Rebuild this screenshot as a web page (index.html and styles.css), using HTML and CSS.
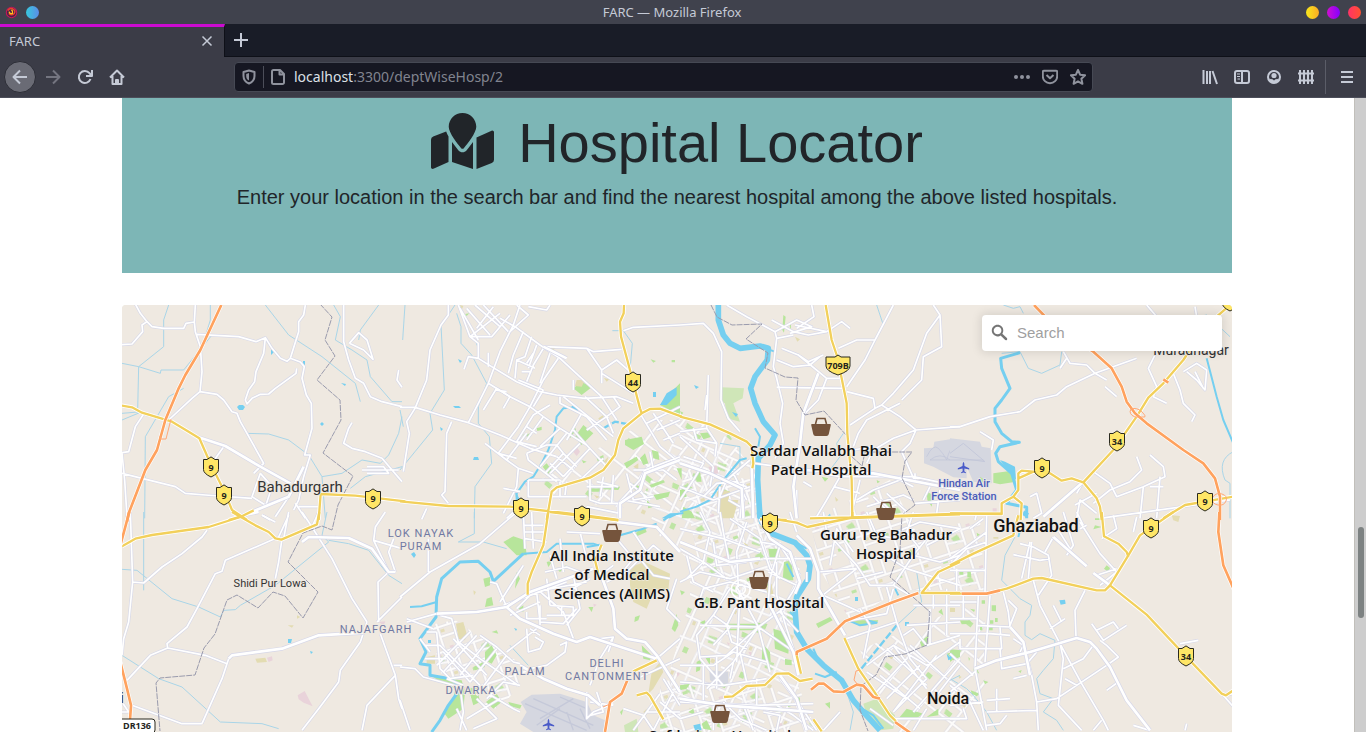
FILE: index.html
```html
<!DOCTYPE html>
<html lang="en">
<head>
<meta charset="utf-8">
<meta name="viewport" content="width=device-width, initial-scale=1">
<title>FARC</title>
<link rel="stylesheet" href="styles.css">
</head>
<body class="window">
<header class="chrome">
  <div class="titlebar">
    <div class="title-side">
      <svg class="dot" viewBox="0 0 14 14" aria-hidden="true"><circle cx="7" cy="7" r="5.6" fill="#4a2145" stroke="#c2185b" stroke-width="1.2"/><path d="M3 5Q5 2 8 3Q12 5 10 8Q7 11 4 8" fill="none" stroke="#e8432e" stroke-width="1.6"/><path d="M4.500 6Q5 9 8 8Q9 6 7 4" fill="none" stroke="#ffc21f" stroke-width="1.500"/></svg>
      <span class="dot dot-blue"></span>
    </div>
    <div class="window-title">FARC — Mozilla Firefox</div>
    <div class="title-side title-end">
      <button class="dot dot-yellow" aria-label="Minimize"></button>
      <button class="dot dot-purple" aria-label="Maximize"></button>
      <button class="dot dot-red" aria-label="Close window"></button>
    </div>
  </div>
  <div class="tabbar">
    <div class="tab"><span>FARC</span>
      <button class="icon-btn" aria-label="Close tab"><svg class="icon" viewBox="0 0 16 16"><path d="M3.500 3.500l9 9m0-9l-9 9"/></svg></button>
    </div>
    <button class="new-tab" aria-label="New tab"><svg class="icon" viewBox="0 0 16 16"><path d="M8 1v14M1 8h14"/></svg></button>
  </div>
  <nav class="navbar">
    <div class="nav-left">
      <button class="back" aria-label="Back"><svg class="icon" viewBox="0 0 16 16"><path d="M15 8H1.500M8 1.500L1.500 8 8 14.500"/></svg></button>
      <button class="icon-btn dim" aria-label="Forward"><svg class="icon" viewBox="0 0 16 16"><path d="M1 8h13.500M8 1.500L14.500 8 8 14.500"/></svg></button>
      <button class="icon-btn" aria-label="Reload"><svg class="icon" viewBox="0 0 16 16"><path d="M13.500 10A6 6 0 1 1 12.500 4.200L14 6"/><path d="M15 1v6H9" /></svg></button>
      <button class="icon-btn" aria-label="Home"><svg class="icon" viewBox="0 0 16 16"><path d="M1 8.500L8 1.500l7 7M3.500 7v8h9V7M7 15v-4h2v4"/></svg></button>
    </div>
    <div class="urlbar">
      <svg class="icon grey" viewBox="0 0 16 16" aria-hidden="true"><path d="M8 1.500L13.500 3v4c0 3.500-2 6-5.500 7.500C4.500 13 2.500 10.500 2.500 7V3z"/><path d="M8 4v7.500C6 10.500 5.200 9 5.200 7V5z" fill="currentColor" stroke="none"/></svg>
      <span class="url-sep"></span>
      <svg class="icon grey" viewBox="0 0 16 16" aria-hidden="true"><path d="M3.500 1H10l4 4v8.500a1.500 1.500 0 0 1-1.500 1.500h-9A1.500 1.500 0 0 1 2 13.500v-11A1.500 1.500 0 0 1 3.500 1zM9.500 1v4.500H14"/></svg>
      <div class="url"><b>localhost</b>:3300/deptWiseHosp/2</div>
      <button class="icon-btn grey" aria-label="Page actions"><svg class="icon" viewBox="0 0 16 16"><g fill="currentColor" stroke="none"><circle cx="2" cy="8" r="2"/><circle cx="8" cy="8" r="2"/><circle cx="14" cy="8" r="2"/></g></svg></button>
      <button class="icon-btn grey" aria-label="Save to Pocket"><svg class="icon" viewBox="0 0 16 16"><path d="M2 1.800h12a1.200 1.200 0 0 1 1.200 1.200v4.200a7.200 7 0 0 1-14.400 0V3A1.200 1.200 0 0 1 2 1.800zM4.500 6L8 9.300 11.500 6"/></svg></button>
      <button class="icon-btn grey" aria-label="Bookmark"><svg class="icon" viewBox="0 0 16 16"><path d="M8 1l2.100 4.700 5 .6-3.700 3.500 1 5L8 12.300l-4.400 2.500 1-5L.900 6.300l5-.6z"/></svg></button>
    </div>
    <div class="nav-right">
      <button class="icon-btn" aria-label="Library"><svg class="icon" viewBox="0 0 16 16"><path d="M1.500 1v14M5 2v13M8 2v13M10.500 2l4.500 13"/></svg></button>
      <button class="icon-btn" aria-label="Sidebars"><svg class="icon" viewBox="0 0 16 16"><rect x="1" y="2" width="14" height="12" rx="2"/><path d="M8 2v12"/><path d="M3 5h3M3 7.500h3M3.500 10H6" stroke-width="1"/></svg></button>
      <button class="icon-btn" aria-label="Account"><svg class="icon" viewBox="0 0 16 16"><circle cx="8" cy="8" r="6"/><circle cx="8" cy="6.500" r="2.600" fill="currentColor" stroke="none"/><path d="M3 9.500q2 1 3 .5l2 1.500 2-1.500q1 .5 3-.5-1 4.500-5 4.500t-5-4.500z" fill="currentColor" stroke="none"/></svg></button>
      <button class="icon-btn" aria-label="Extension"><svg class="icon" viewBox="0 0 16 16"><path d="M2 1v14M6 1v14M10 1v14M14 1v14M0 4.500h16M0 11.500h16"/></svg></button>
      <span class="nav-sep"></span>
      <button class="icon-btn" aria-label="Menu"><svg class="icon" viewBox="0 0 16 16"><path d="M2 3h12M2 8h12M2 13h12"/></svg></button>
    </div>
  </nav>
</header>

<div class="viewport">
<main class="page">
  <section class="jumbotron">
    <h1 class="headline">
      <svg class="map-mark" viewBox="0 0 576 512" aria-hidden="true"><path d="M288 0c-69.590 0-126 56.410-126 126 0 56.260 82.350 158.800 113.900 196.020 6.390 7.540 17.820 7.540 24.200 0C331.650 284.800 414 182.260 414 126 414 56.410 357.590 0 288 0zM20.120 215.950A32.006 32.006 0 0 0 0 245.660v250.320c0 11.320 11.430 19.060 21.940 14.860L160 448V214.920c-8.840-15.980-16.070-31.540-21.250-46.420L20.120 215.950zM288 359.670c-14.070 0-27.380-6.180-36.510-16.960-19.660-23.200-40.570-49.620-59.490-76.720v182l192 64V266c-18.920 27.090-39.820 53.520-59.490 76.720-9.130 10.770-22.440 16.950-36.510 16.950zm266.060-198.510L416 224v288l139.880-55.950A31.996 31.996 0 0 0 576 426.340V176.020c0-11.320-11.430-19.060-21.940-14.860z"/></svg>
      <span>Hospital Locator</span>
    </h1>
    <p class="lead">Enter your location in the search bar and find the nearest hospital among the above listed hospitals.</p>
  </section>

  <section class="map" aria-label="Hospital map">
  <svg class="map-canvas" viewBox="122 305 1110 440" role="img" aria-label="Map of Delhi">
  <defs>
    <!-- repeating city blocks for the dense districts -->
    <pattern id="blocks" width="62" height="54" patternUnits="userSpaceOnUse" patternTransform="rotate(24)">
      <path class="green" d="M5 5h7v5h-6zM38 22l9-1 1 7-8 1zM20 42h5v6h-5z"/><path class="sand" d="M50 42h4v4h-4zM18 15h3v4h-3z"/>
      <g class="pt-case"><path d="M0 13L62 13M0 35L30 33 62 35M15 0V54M34 0L35 34 34 54M50 13L51 36M24 13V34M0 46H15M34 25H62"/></g>
      <g class="pt-road"><path d="M0 13L62 13M0 35L30 33 62 35M15 0V54M34 0L35 34 34 54M50 13L51 36M24 13V34M0 46H15M34 25H62"/></g>
    </pattern>
    <pattern id="blocks2" width="48" height="44" patternUnits="userSpaceOnUse" patternTransform="rotate(-18)">
      <path class="green" d="M18 14l7-2 2 7-6 2zM3 33h5v3h-5z"/><path class="pink" d="M36 5h4v4h-4z"/><path class="sand" d="M32 31h4v3h-4z"/>
      <g class="pt-case"><path d="M0 9L48 9M12 0L12 44M0 28L48 28M30 0V44M12 18L30 20M41 9V28M30 38H48"/></g>
      <g class="pt-road"><path d="M0 9L48 9M12 0L12 44M0 28L48 28M30 0V44M12 18L30 20M41 9V28M30 38H48"/></g>
    </pattern>
    <pattern id="blocks3" width="76" height="66" patternUnits="userSpaceOnUse" patternTransform="rotate(38)">
      <path class="green" d="M5 24h6v5h-6zM42 42h8v5h-7z"/>
      <g class="pt-case"><path d="M0 18H76M0 50H76M20 0V66M56 0V66M38 18V50M20 34H56"/></g>
      <g class="pt-road"><path d="M0 18H76M0 50H76M20 0V66M56 0V66M38 18V50M20 34H56"/></g>
    </pattern>

    <g id="minor">
      <g transform="translate(122 300) scale(.33333)">
        <path d="M40 12L55 40 75 65 60 75 62 95 30 132 0 134M75 65L90 80 125 85 185 85 192 70 217 66 220 15M217 66L220 95 235 140 240 215 234 275M225 103L350 110 402 125 430 113 450 145 475 175 495 184 505 175 535 186 547 200 540 235 553 285 568 310 570 385 548 465 565 465 545 530 530 600 515 630M505 175L530 95 530 65 545 45 550 15M430 113L425 160 402 215 398 245 380 270 370 300 375 312 390 295 415 283 440 282 460 265 522 220 524 205M234 275L210 295 140 360 65 342 40 380 20 455 0 458M234 275L285 283 305 300 330 335 345 340 355 365 375 400 425 490 395 520M305 440L270 490M415 520L390 590 430 615 500 590M0 520L60 535 160 560 190 580 250 585 390 595M0 460L8 540 15 650"/>
        <path d="M665 15L665 125 680 180 700 235 725 250 745 290 780 305 840 320M682 130L710 98 735 120 753 178 725 150 682 130M830 210L825 240 840 262M690 368L680 385 665 430 690 445 730 455 780 475 840 545M735 500H785L800 520H735M720 510H830M530 620H590M520 610L550 655M415 520L450 560 430 620M500 590L460 650M420 645L445 660"/>
      </g>
      <g transform="translate(400 300) scale(.33333)">
        <path d="M145 15L145 45 123 75 90 150 80 240 45 325 20 365 28 400 10 515M0 322H45L120 345 205 368 300 405 390 445 470 470M155 365L140 400 135 575 125 585 145 610M175 15L210 110 235 130 235 175 275 200 350 245 420 275 470 285 555 295 650 290 700 310M235 175L205 170 192 208M265 158L265 200M300 55L345 80 420 135 480 175 545 235 605 290 650 360M360 15L340 75 300 155 265 250 235 310 205 368M265 250L330 290 390 320 430 350 480 385 560 435 620 500M430 140L560 145 580 155 665 148M560 145L605 210 605 250M605 210L650 180 690 215M605 220L700 280M670 92L700 82 840 75M210 110L275 110 330 45M210 110L300 40M230 85L280 20M235 120L180 25M270 105L200 25M300 80L225 15M325 95L250 15M385 20L440 30 450 15M350 15L385 45 330 95"/>
        <path d="M370 95L340 165 325 220M395 110L375 170 350 180 345 235M410 135L385 205M430 145L400 195 380 245M450 160L420 250M475 175L430 240 390 320 355 380 295 460M365 215L395 215M350 180L405 205M380 190L400 160M355 240L430 270M430 270L400 320M450 315L400 345 350 425 410 440M430 350L380 420M380 380L410 400M480 385L420 440M255 430L320 480 355 505 400 520M320 480L380 400M295 460L350 475M250 330L290 265 330 290 310 325M285 270L320 275M355 505L350 560 310 640M310 565L360 575M380 460L440 435 470 435 490 460 435 520M380 460L385 480 470 545M500 400L420 500M540 430L450 520M570 445L490 530M610 475L540 540M450 490L490 530M490 460L530 500M520 390L560 435M470 470L520 510M385 540H480M385 540V590H560M480 545V590M500 545L495 585M570 530V600L600 610 655 610M560 560H640M610 530L600 590M640 525L635 610M590 545L655 560M655 610L720 540 735 510 840 470M655 610V655M670 600L780 620M690 550L750 600M735 510L720 570 740 600M720 340L780 440 840 490M760 340L820 430M740 370L840 320M770 390L840 360M790 420L840 400M490 290L640 410M520 270L520 240M640 290L660 320 620 350 640 400M620 350L560 390M555 290L625 355M480 290V310L560 350 620 420M500 420L545 340M560 620L660 640M680 520L700 600 760 590M750 455L760 510M700 510H790L830 540M80 625L65 658M320 655L380 600"/>
      </g>
      <g transform="translate(680 300) scale(.33333)">
        <path d="M0 75L70 70 100 100 125 155 123 300 145 355 180 395M85 225L80 385M80 285L75 330M140 15L200 50 285 95 290 115 280 200 290 235 308 310 300 370 310 430 285 475M275 60L340 95 385 105 440 95 485 65 510 85M285 95L350 60 395 80 330 100M345 75L440 95M290 115L340 105M305 145L355 165 385 185 430 165M290 180L340 200 390 195 420 170M355 165L440 235 480 235M440 235L415 300 370 345M290 262L490 265M475 145L530 120 585 120 640 15M585 120L555 180 500 260M500 275L580 295 585 325 605 315M585 325L510 375M605 315L640 280 700 210 740 100 780 45 760 15M605 315L660 350 708 390 840 380M780 45L785 140 730 170 725 240 665 300M708 390L690 430 665 455 705 545 705 520M708 390L640 415 580 450 560 490M660 310L560 360 535 400 520 440M395 15L402 50 350 85M0 395L80 385 110 430 105 470M0 410L100 500M40 385L50 420 110 430M0 490L200 560M0 560L100 600 210 560M0 600L40 540 70 490 10 470M100 500L90 560M210 480L140 540 115 600M70 590L110 550 170 545M120 560L115 640M160 520L200 600M190 550L180 655M145 600L180 620M225 490L370 510 480 530 700 530 840 560M480 530L440 600 410 650M460 560L540 580M370 545L395 560M350 570L350 655M520 450L580 440M540 540L520 620M530 600L580 570 660 540 700 560M560 620L670 585 700 600M600 600L650 650M620 580L680 635M580 590L630 640M750 560L730 600M780 570L770 640M705 610L840 600"/>
      </g>
      <g transform="translate(950 300) scale(.33333)">
        <path d="M0 380H30L120 350 210 335 255 300 320 285 350 260 435 220 560 175M340 155L360 190 410 195 435 220 470 240M330 205L350 175M465 260L500 290M620 155L595 205 620 260 610 290 650 310M670 220L690 270 700 310 735 345 725 365M700 215L740 190 770 210 765 270 740 240 710 215M735 215L760 265M560 470L575 510 540 545 480 570 430 610M600 465L640 500 645 530 580 560 500 590 480 550 430 515M580 560L570 655M630 530L620 655M600 560H640M240 590L260 580 275 640 250 655M380 580L400 545M375 615L440 580M380 655L390 600 440 640M90 395L130 420 125 450M75 660L80 640M735 20L740 50M590 15L620 50M450 655L840 600"/>
      </g>
      <g transform="translate(122 512) scale(.33333)">
        <path d="M25 0L32 210 20 330 5 380 0 430M32 210L65 213 120 165 180 125 240 75 255 55M500 10L470 75 310 145 300 178 280 185 225 290 195 345 135 395 137 408 250 430 315 455M137 408L85 430 15 505M480 80L470 150 460 200M320 440L300 500 240 635M0 570L20 600H0M30 580L180 635 240 635M540 0L560 30 630 140 690 260 735 330M840 255L775 320 765 330M770 330L768 210 800 180 755 85 760 45 780 15 790 0M755 85L840 110M820 180L800 120 815 80M735 330L715 390 655 475 650 510 590 590 540 655M775 365L820 490 830 560 840 590M820 490L735 580 720 655M815 460H840M420 10L460 30M500 0L485 80M570 45L590 0"/>
      </g>
      <g transform="translate(400 512) scale(.33333)">
        <path d="M85 80V180M0 255L90 180 240 95 350 0M20 320L100 350M20 330L110 305M0 465L45 470 70 495 180 525 190 600 180 655M0 565L30 655M320 285L290 215 270 210M300 270L370 160M310 280L500 210M370 0L375 110M395 0L400 110M375 60H440M375 80L440 90M370 40H430M435 180L500 165 540 180M450 130L470 200M480 80L490 180M410 230L490 300 520 380M440 200L450 280M450 280L520 285V310H440M485 285V310M410 240L420 330 490 335 530 290M350 290L400 240 560 210M330 310L420 270M380 300V320H440M420 280V340M520 190L540 290 500 340M570 200L500 240M120 310L155 320 175 390 240 440 355 520M240 370L290 405 340 450 360 455M260 390L180 490M290 410L210 510M320 430L230 550M210 360L110 460M230 370L130 480M160 380L260 490M130 420L210 510M75 400H120L240 520M75 440H140M110 360L120 470 150 500 220 490M80 360H110M60 380L90 420M140 500L190 520M380 350L385 420 420 410 430 390 405 375M390 350L420 370M480 400L500 390 495 420 440 460 390 470M410 350L320 420M600 380L640 375 600 440 570 520M640 375L625 420M560 540V620L580 600 640 575M570 570L640 580M590 540L610 600 570 610M240 530L340 590 360 600M260 560L310 510 360 520M200 620L300 560M230 560L290 620 220 650M170 590L200 655M500 60L600 65M540 60L560 140M600 190L640 160M620 210L680 180 760 100 820 150M650 80L700 140 650 200M700 60L740 120M720 140L760 190 810 200M830 200L800 290 840 330M770 440L840 380M710 500L840 440M670 590L730 610 760 655M740 600H840M790 500L840 580M780 545L700 655M820 540L760 655M780 570L840 620"/>
      </g>
      <g transform="translate(680 512) scale(.33333)">
        <path d="M170 225L235 345 310 290M235 345L160 450 80 530M235 345L270 480M235 345L60 340M235 345L350 425M235 345L140 430 60 435M150 230L100 310 50 370 60 440 130 520M180 235L170 450M50 290L70 230 150 210 260 240M200 270L165 290 140 340 155 390 200 410M100 310L150 345 100 400M0 460H100L160 420 260 450M0 510L130 520 260 500M70 460V570M110 430V530M160 450L150 500M230 500V580M180 420L200 510M0 570L100 575 230 580 400 575M100 575V655M70 600L0 620M130 570L180 620 260 655M190 580L220 655M290 580L340 610 400 655M250 600L300 610 290 655M300 500L360 580 410 655M300 200L270 170 240 80 150 20M0 110L70 150 140 200M0 50L130 80 240 120M60 0L90 60 70 150 20 200M120 0L130 60 150 160M200 30L170 120 175 225M0 210L60 180 150 200 240 170M20 130L40 210 100 240M100 90L110 160 200 150M240 90L300 100 360 190M250 140H400M300 100L270 200 265 270M290 150V250L320 350 350 440M265 180L350 220 300 300M300 300L355 360M330 0L350 60M430 0L440 60 530 160 570 220H640L700 130 740 80M415 180L530 170M530 170L415 260M530 200L610 180M450 160L470 50 520 120M600 120L680 170 840 220M700 130L780 150 840 130M770 180L780 210M740 100L840 50M620 225L650 330 690 440 740 500M640 220L690 250M490 330L620 305 640 230M500 380L560 360 650 330M540 290L570 340 550 440M430 250L540 300M560 460L640 400 740 460 840 390M640 400L740 530M600 490L720 590M620 410L740 520M560 480L680 560M680 440L580 550M720 460L620 560M740 500L640 600M690 400L800 500M770 430L640 600M840 440L700 600M840 460L770 550M670 370L700 350 740 400 840 370M680 340L840 330M700 280H840M760 240V290M800 230V370M750 290V400M570 590L640 640M740 590L700 655M640 620L840 620M480 600L430 655M380 180V210M560 0L590 70 650 80M700 0L680 60 720 110M650 60L720 30 840 50"/>
      </g>
      <g transform="translate(950 512) scale(.33333)">
        <path d="M0 160L50 110 110 90M110 10L105 240M0 175H105M0 140L110 60M60 50L100 20M20 170V240M190 128L270 145 300 140M210 95L250 105 295 130 305 190 265 250M240 90L215 200M245 90L235 200M285 120L310 75M340 0L370 100 350 130M390 50L410 40M310 30L360 110M390 30L450 125 500 180 450 220M470 210L440 190 500 170M250 205L270 280 330 395 395 515 460 625 475 655M405 235L375 295 378 375M160 240L175 300 180 345 220 390 245 490 260 570 265 655M180 345L80 340M175 265L200 290 180 340M310 280L335 330M300 350L345 320M0 320H80M85 250L75 470 100 600 110 655M120 250L105 450M0 270H80M40 250V320M0 365L120 365 180 370M30 380V410H75M75 410H155L150 345M150 410L155 470 230 455 260 420M80 475L0 540M0 425L70 490M0 520L60 570 100 655M190 380L220 400 210 420M190 500L230 490M110 565L180 560M140 530V600M110 600L260 595M110 640L150 635 170 610M330 395L340 440 325 580 395 655M340 470L400 440 430 400M345 500L380 520M260 570L320 560 380 520 470 460 505 435 470 400 450 385M425 335L460 385 530 340M440 355L490 330 505 350M430 655L455 625M470 535L505 510M0 620L50 620 40 590M0 580L100 570M550 640L600 655M690 395L745 385M850 545L820 550 855 590M705 655L710 635M550 60L560 15M490 10L500 50 455 80M380 0L400 40"/>
      </g>
    </g>
    <g id="arterial">
      <g transform="translate(122 300) scale(.33333)"><path d="M230 412L310 438 415 500 505 550M355 650L500 590 545 500"/></g>
      <g transform="translate(400 300) scale(.33333)"><path d="M840 480L735 520 720 570 660 610V655M430 140L500 175"/></g>
      <g transform="translate(680 300) scale(.33333)"><path d="M415 220L370 340 360 430 340 560 350 655M215 500L220 655M0 490L90 520 185 565 190 655M370 510L580 520 840 570"/></g>
      <g transform="translate(950 300) scale(.33333)"><path d="M395 550L280 650"/></g>
      <g transform="translate(122 512) scale(.33333)"><path d="M360 10L410 0M540 90L560 75 680 78 750 110 800 180 820 180M320 440L330 430 480 410 590 370 725 362"/></g>
      <g transform="translate(400 512) scale(.33333)"><path d="M110 305L230 300 320 285 390 240 500 200 580 170M320 285L360 320 460 365 530 390 570 375 770 440M600 180L640 290 645 350 680 380 735 390 770 430 840 540M360 460L430 500 500 530 565 550 600 580M650 30L770 45 840 120"/></g>
      <g transform="translate(680 512) scale(.33333)"><path d="M240 20L270 80 330 120 360 210 345 245M350 70L390 110 415 180 415 230 495 370M265 270L340 420 355 490M0 90L150 150 240 140M300 490L350 560 380 655M0 560L130 580 400 600"/></g>
      <g transform="translate(950 512) scale(.33333)"><path d="M75 470L140 445 240 420 380 378 420 390 440 410 480 465 530 565 600 655M310 75L410 163M430 183L480 220M180 345L220 390 240 490"/></g>
    </g>
    <g id="yellow">
      <g transform="translate(122 300) scale(.33333)"><path d="M-10 315L30 322 60 338 150 365 200 395 232 415 265 490 305 570 330 630 375 660M320 660L355 650M590 660L596 582 700 587 850 604"/></g>
      <g transform="translate(400 300) scale(.33333)"><path d="M0 604L145 618 330 620 545 645 655 660M672 15L671 40 660 65 663 110 690 210 720 325 725 340 670 385 655 420 645 465 610 510 570 533 470 562 455 575 440 660M725 340L750 327 780 326 845 350"/></g>
      <g transform="translate(680 300) scale(.33333)"><path d="M0 350L90 373 150 400 200 425 215 440 220 490 217 505M437 15L455 120 470 165 485 235 500 310 502 400 515 540 517 652 390 655M517 652L840 641M240 658L320 660"/></g>
      <g transform="translate(950 300) scale(.33333)"><path d="M0 640L155 642 155 610 190 590 205 570 205 520 215 512 250 515 300 520 335 542 365 535 400 547 490 450 560 350 595 293 640 250 700 180 740 120 800 50 840 15M400 547L440 595 450 620 455 660M205 535L250 515M190 590L215 610 212 660M640 655L705 615 850 590"/></g>
      <g transform="translate(122 512) scale(.33333)"><path d="M0 103L40 80 90 69 260 45 355 15 395 -5M330 0L400 40 440 60 460 79 478 83 585 37 592 0"/></g>
      <g transform="translate(400 512) scale(.33333)"><path d="M445 0L430 100 395 180 383 215 383 248M450 0L655 25M605 98L585 145 595 185M770 445L700 478M710 550L740 542 750 552 790 622"/></g>
      <g transform="translate(680 512) scale(.33333)"><path d="M290 22L350 32 382 45 510 18 840 7M517 0V18M840 150L775 180 725 243 840 243M493 378L535 470 580 535 630 610 650 630M350 430L363 485M132 555L158 553 200 522 255 519 290 485 325 484 360 507 398 500M400 622L425 658"/></g>
      <g transform="translate(950 512) scale(.33333)"><path d="M0 5L157 5M0 160L70 125 190 70 205 10M0 245H110L170 230 250 200 275 198 440 235 465 235 480 220 535 130 570 70 670 0M455 0L462 73 505 95 530 120 535 135M480 220L590 308 700 425 815 545 828 550 850 535"/></g>
    </g>
    <g id="orange">
      <g transform="translate(122 300) scale(.33333)"><path d="M298 15L235 150 190 225 170 265 130 360 105 450 70 510 45 575 20 640 15 665"/></g>
      <g transform="translate(950 300) scale(.33333)"><path d="M252 15L320 85 430 155 485 205 515 260 530 305 555 340 590 370 700 450 760 490 795 535 810 590 810 660M640 238L655 248"/></g>
      <g transform="translate(122 512) scale(.33333)"><path d="M22 0L-5 100M-5 450L15 530 27 580 22 655"/></g>
      <g transform="translate(400 512) scale(.33333)"><path d="M682 505L665 545 630 570 615 660"/></g>
      <g transform="translate(680 512) scale(.33333)"><path d="M350 430V420L440 380 495 328 640 270 715 243M393 533L415 515 432 515 460 538 490 540 530 518 550 521 580 555 600 560M645 630L690 662"/></g>
      <g transform="translate(950 512) scale(.33333)"><path d="M35 245H110L150 235M808 0L805 60 820 160 855 240"/></g>
    </g>

    <symbol id="shield" viewBox="0 0 18 22"><path d="M1.500 3.500H5L9 .9l4 2.600h3.500v10q0 4-7.500 7.500-7.500-3.500-7.500-7.500z"/></symbol>
    <symbol id="shield-wide" viewBox="0 0 26 22"><path d="M1 3h9l3-2 3 2h9v9q0 5-12 9Q1 17 1 12z"/></symbol>
    <symbol id="basket" viewBox="0 0 20 20"><path d="M4.500 7L6 1.500h8L15.500 7" fill="none" stroke="#75543c" stroke-width="1.600"/><path d="M1 7h18q1 0 .8 1l-2 9q-.5 2-2.300 2h-11q-1.800 0-2.300-2l-2-9Q0 7 1 7z" fill="#75543c"/></symbol>
    <symbol id="plane" viewBox="0 0 16 16"><path d="M8 1q1.200 1 1.200 5l5.800 3v1.500l-5.800-1.300L9 12.500l2 1.500v1l-3-.7-3 .7v-1l2-1.500-.2-3.300L1 10.500V9l5.800-3Q6.800 2 8 1z" fill="#4a5bc8"/></symbol>
  </defs>

  <rect x="100" y="290" width="1160" height="480" fill="#efe9e1"/>

  <!-- dense districts -->
  <g opacity=".85">
    <path fill="url(#blocks3)" d="M540 480L650 420 720 420 745 460 720 520 640 510 560 500z"/>
    <path fill="url(#blocks)" d="M640 500L680 430 750 440 765 530 800 560 795 640 800 700 790 740H660L670 670 690 600 690 560 640 520z"/>
    <path fill="url(#blocks2)" d="M810 520L890 480 915 530 980 520 985 590 900 590 850 620 820 570z"/>
    <path fill="url(#blocks2)" d="M680 470L755 480 765 530 790 550 750 590 700 570z"/>
    <path fill="url(#blocks3)" d="M860 650L930 620 985 600 985 690 960 740 900 740z"/>
    <path fill="url(#blocks2)" d="M430 625L455 620 530 670 500 710 445 690z"/>
    <path fill="url(#blocks2)" d="M660 680L800 690 820 740H660z"/>
  </g>

  <!-- parks and built-up land -->
  <g transform="translate(400 300) scale(.33333)">
    <path class="green" d="M525 410L550 375 580 400 545 435zM505 405L525 382 528 390 510 415zM675 420L725 410 732 432 700 450 675 435zM428 500L440 490 455 510 445 522zM520 265L545 245 575 262 545 285zM672 490L710 470 715 480 680 505zM720 475L735 460 745 490 730 495zM755 450L775 455 778 480 760 475zM590 475L610 465 612 485 595 488zM810 280L840 250V345L780 315zM748 555L790 540 795 547 755 563zM760 585L810 575 805 590 770 600zM565 565H605V575H570zM610 555L660 560 655 570 610 568zM410 385L425 380 425 390 412 393zM365 405L395 400 390 412zM195 42L208 40 200 48zM752 178L768 183 760 188zM815 180H825V187H815zM590 320L605 328 600 335zM545 480L560 485 550 490zM700 550L720 560 705 572zM830 505H845V540zM740 600L760 620 745 625z"/>
    <path class="sand" d="M530 240L555 240 545 260 525 258zM450 140L465 145 460 152 448 148zM595 355L610 345 612 360 600 365zM612 234L628 238 620 245zM610 485L625 470 620 490zM700 500L715 490 715 510zM582 585L600 590 590 595zM180 15L190 18 185 30z"/>
    <path class="pink" d="M515 450L530 440 540 455 530 468zM370 545L385 550 380 560z"/>
  </g>
  <g transform="translate(680 300) scale(.33333)">
    <path class="park2" d="M123 262L192 265 188 295 160 310 180 365 140 355 135 310 123 305z"/>
    <path class="green" d="M310 45L317 50 312 98 307 90zM328 70L333 75 332 95zM60 400L90 397 95 410 70 418zM115 562L150 575 145 590 120 585zM45 525L60 515 65 545 50 545zM0 570L15 565 20 590 0 595zM10 620L35 635 45 655 5 655zM425 530L445 535 435 545zM590 540L600 545 592 550zM740 575L760 585 755 620 742 600zM600 610L625 605 635 635 605 640zM0 333L10 338 5 345z"/>
    <path class="sand" d="M345 110L360 118 352 125zM110 575L130 570 150 575 145 600 175 600 160 655 120 655zM465 590L475 600 468 605z"/>
    <path class="pink" d="M85 500L110 497 115 520 95 525zM585 595L595 605 585 610z"/>
    <path class="air" d="M732 445L760 443 763 425 815 417 860 427V535L820 532 760 500 732 490z"/>
    <path d="M740 470q20-40 35-25t25 35q10-40 25-40v40M750 480q30-25 60 0h-60z" fill="none" stroke="#bfc4d8" stroke-width="2"/>
  </g>
  <g transform="translate(950 300) scale(.33333)">
    <path class="air" d="M0 415L90 425 95 440 122 445 125 550 70 545 50 500 0 510z"/>
    <path d="M0 460L40 430 105 485 0 470M0 480H100" fill="none" stroke="#c4c8da" stroke-width="3"/>
    <path class="green" d="M130 520L185 512 198 545 150 553 130 548z"/><path class="green" d="M90 530L105 540 95 550zM435 655H450V660H435z"/>
    <path class="pink" d="M128 625h12v10h-12z"/>
  </g>
  <g transform="translate(122 512) scale(.33333)">
    <path class="sand" d="M400 440L430 437 435 450 405 452zM497 340L515 340 510 347zM525 310L535 315 525 320z"/><path class="pink" d="M527 550L548 537 560 560 572 583 545 572 530 562zM435 437L450 433 452 445 440 450zM770 330L790 328 785 340z"/>
  </g>
  <g transform="translate(400 512) scale(.33333)">
    <path class="green" d="M310 90L340 73 375 85 380 130 350 130zM250 200L270 195 270 220 255 225zM260 260L275 255 280 280 255 285zM255 420L275 400 290 430 275 455 255 445zM220 465L250 450 255 465 225 475zM100 495L185 505 195 540 190 590 145 620 130 600 160 560 165 530 120 510zM258 570L290 545 305 570 280 590zM205 530L230 525 240 570 220 580zM325 570L365 580 360 590 330 582zM815 350L830 305 835 340 825 360zM725 400L755 430 750 445 730 440zM705 315L720 310 715 325 703 330zM565 285L580 285 575 300zM710 60L735 45 740 60 705 75zM470 170L500 160 480 180zM355 290L370 280 370 300zM275 360L290 355 295 365zM660 600L670 590 665 610zM350 180L360 200 345 230zM440 150L460 145 445 165z"/>
    <path class="park2" d="M672 640L710 620 715 660 675 660z"/>
    <path class="sand" d="M690 165L735 150 810 185 805 235 765 230 740 290 700 270 690 220zM168 335L190 330 200 365 195 385 175 380zM80 435L105 430 105 455 80 455zM220 235L228 240 222 250zM755 480L780 450 790 480 760 530 745 545zM730 600L740 590 740 610z"/>
    <path class="pink" d="M110 430L125 430 122 440zM580 275L590 278 582 285zM830 480L840 485 832 495z"/>
    <path class="air" d="M362 570L395 548 480 545 560 570 580 610 615 625 610 660H400L360 635 380 600z"/>
    <path d="M375 575L560 655M400 560L580 640M420 620L520 560M480 555L560 590M410 640L480 590M500 600L520 655M540 590L570 650" fill="none" stroke="#c5c9d9" stroke-width="4"/>
  </g>
  <g transform="translate(680 512) scale(.33333)">
    <path class="green" d="M280 350L330 365 325 425 285 410zM135 335H230V343H135zM135 350H225V355H135zM248 395L270 420 272 450 245 445zM315 440L335 445 335 460 315 458zM408 335L450 315 458 325 415 348zM312 150L335 145 340 205 308 205zM505 325L595 325 590 335 540 342zM50 450L65 440 60 475 48 480zM75 435L90 430 90 460zM0 520L30 515 20 530 0 535zM25 600L40 590 45 610zM265 110L295 110V145H270zM720 390L745 370 742 395 725 405zM800 425L840 415V435L820 445zM655 620L680 590 730 605 700 625zM740 615L775 590 775 610zM775 300L785 290 790 310zM435 575L450 570 450 590zM65 635L80 625 95 655 70 650zM60 330L75 325 80 350zM0 235L15 240 5 250zM500 80L510 90 500 95z"/>
    <circle class="green" cx="234" cy="347" r="15"/>
    <path class="park2" d="M550 575L590 560 645 610 640 650 600 655 560 610z"/>
    <path class="sand" d="M255 225L275 215 280 245 265 250zM350 595L360 590 355 605zM625 435L640 435 635 442zM190 90L205 100 200 108zM730 455L740 450 738 462zM375 610L385 605 385 620z"/>
    <path class="pink" d="M245 230L258 225 255 245zM40 210L50 205 45 215zM140 390L150 395 145 400zM205 420L215 420 212 432z"/>
    <path class="air" d="M88 475L145 480V512L120 518 90 505z"/>
  </g>
  <g transform="translate(950 512) scale(.33333)">
    <path class="green" d="M52 178L62 176 64 195 52 196zM28 180H40V188H28zM462 170L470 160 480 168 475 180zM95 265H105V275H95zM125 280L138 280 138 298 125 297zM135 318H143V330H135zM120 325H130V335H120zM0 412L35 415 20 435 0 450zM115 345H128V355H115zM90 345H97V355H90zM30 325L60 325 65 335 35 337zM60 290L75 293 72 300zM75 458L88 485 80 480 70 475zM55 435L60 440 57 447zM100 505L115 510 105 517zM62 535L90 545 80 553 65 545zM205 478L215 474 212 483zM435 40L455 45 430 52zM80 62L90 68 82 73z"/>
    <path class="sand" d="M665 10L690 12 685 30 670 25zM0 287L15 288 15 300H0zM130 75H145V80H130zM25 490L35 495 28 500zM35 580L48 580 45 588z"/>
  </g>

  <!-- rivers, drains and ponds -->
  <g class="stream">
    <g transform="translate(122 300) scale(.33333)"><path d="M140 15L125 60 125 140 50 200 47 330M0 190L50 200 115 220 117 210 185 210 270 105M430 15L500 105 600 170 700 250 715 305M375 400L440 402 500 420 560 465 600 530M185 265L140 290 70 410 68 655M770 15L715 90 710 120M635 15L655 50 640 120 690 150 735 180 745 230 810 305H840M0 340L60 335 0 360M265 15V60L250 110M840 350L830 400 800 465 775 490 720 480 660 520 600 530 610 655M685 565L730 530 840 500"/></g>
    <g transform="translate(400 300) scale(.33333)"><path d="M170 40L183 80 183 130 215 165 260 250 235 320 235 370 268 410 275 490 225 560 223 655M123 75L133 270 90 340 98 390 45 455 0 510M165 15L145 45M15 15L8 120M637 92L670 92 697 130 690 210M0 330L10 380"/></g>
    <g transform="translate(680 300) scale(.33333)"><path d="M590 15L610 75M490 400L470 430 480 470 450 510M120 430L180 440 180 500 120 550"/></g>
    <g transform="translate(950 300) scale(.33333)"><path d="M160 15L190 25 210 20 220 40M155 160L210 155 235 205 275 220 330 195 335 155M850 455Q800 480 825 540L840 550V655M700 60L770 45 840 110"/></g>
    <g transform="translate(122 512) scale(.33333)"><path d="M65 0V235M0 172L45 175 150 260 230 285 295 315 305 295 340 293 355 280 460 220 620 90 600 70 615 0M620 85L680 95 740 115 800 190 840 215M0 430L110 500 180 525 295 630 420 635 470 650"/></g>
    <g transform="translate(400 512) scale(.33333)"><path d="M223 0V65L175 90 250 90 320 110M360 0L370 30M330 400L385 460"/></g>
    <g transform="translate(680 512) scale(.33333)"><path d="M710 180L725 270 650 340M620 220L650 330M840 490L800 510M510 655L520 600 500 540"/></g>
    <g transform="translate(950 512) scale(.33333)"><path d="M195 75L165 130 155 205 210 260 245 280 240 310 225 330 225 370 245 383 270 365 315 385 310 440 280 475 260 500 270 545 310 560 280 600 320 625 340 655M0 500L50 530 70 550 110 600 140 655"/></g>
  </g>
  <g class="water">
    <g transform="translate(680 300) scale(.33333)">
      <path class="w-big" d="M115 15L115 60 130 105 150 130 180 145 240 138 265 145 262 180 225 230 212 265 225 310 250 365 285 405 270 435 235 475 233 540 240 655"/>
      <path class="w-mid" d="M225 385L240 410 235 440M240 140L285 155M0 635L50 620 90 600 130 540 180 480 200 475"/>
    </g>
    <g transform="translate(950 300) scale(.33333)"><path class="w-mid2" d="M210 158L152 175 155 205 180 265 155 300 135 325 135 365 155 400 185 425 208 427 150 440 137 460 145 485 185 520 200 570 170 610 230 622 230 655"/><path d="M150 480L180 520 198 540 195 500 165 485z" fill="#75cff0"/><path class="w-mid" d="M770 175L800 290 820 360 850 430"/></g>
    <g transform="translate(400 300) scale(.33333)"><path class="w-mid" d="M350 600V580L375 545 400 530 425 490 445 450 465 390 470 350 490 325 530 322"/><path class="w-dash" d="M515 320L610 385 645 365 680 372"/><path d="M780 315L800 280 830 262V285L800 315zM785 655L810 640 840 640 810 655zM345 570L360 600 348 595z" fill="#75cff0"/></g>
    <g transform="translate(400 512) scale(.33333)"><path class="w-mid" d="M30 285L65 283 110 270M560 105L600 98M790 25L815 8 850 3M660 70L730 50 770 35M595 100L580 95 470 95 440 120 370 125"/><path class="w-mid2" d="M370 125L280 208 270 180 235 148 180 150 125 200 110 255 108 315 60 380 78 420 60 455 90 460 90 490 150 500 185 525 145 580 120 625 95 660"/></g>
    <g transform="translate(680 512) scale(.33333)"><path class="w-big" d="M238 0L245 30 275 65 345 92 380 130 390 160 385 200 350 255 345 290 350 360 380 410 430 460 485 505 520 565 550 600 600 655"/><path class="w-mid" d="M345 90L380 110M330 300L350 320M400 410L420 455M405 485L435 495 470 480M320 155L340 195M645 230L655 250M505 325L540 340 590 332 560 325M530 580L580 610 610 650"/><path class="w-dash" d="M650 340L540 475"/><path d="M800 425L815 440 805 445zM440 15L450 5 455 22zM40 640L60 635 65 655H45z" fill="#75cff0"/></g>
    <g transform="translate(950 512) scale(.33333)"><path class="w-big" d="M230 0L222 12"/><path class="w-mid" d="M210 55L205 75"/><path d="M328 265L345 263 347 275 332 278zM0 432L10 430 0 445z" fill="#75cff0"/></g>
    <path d="M237 407l2-2h4l2 2-2 3h-4zM271 349l3 3-3 3zM303 361h2v4h-2zM341 383l5 1-1 2zM320 424l2-2 2 2-2 2zM288 639h4l-1 4h-3zM310 651l3 1-2 2zM453 406h6l2 2h-6zM440 427l3 2-2 2zM474 457h4l1 3h-6zM458 359l4 2-2 2zM476 342l3 2-2 2zM653 392h3v5h-3zM694 385l5 2-3 2zM411 554l3-2 2 3-2 3zM514 628l3 1-1 2zM428 640h3v3h-3zM905 622h4v4h-4zM855 597h3v4h-3zM732 412l6 2-2 3z" fill="#75cff0"/>
  </g>

  <!-- roads -->
  <use href="#minor" class="case-minor"/><use href="#minor" class="road-minor"/>
  <use href="#arterial" class="case-art"/><use href="#arterial" class="road-art"/>
  <g transform="translate(680 512) scale(.33333)" fill="none" stroke="#fff" stroke-width="5"><circle cx="182" cy="232" r="14"/><circle cx="182" cy="232" r="28"/></g>

  <g class="border">
    <path d="M320 304L332 317 325 340 335 356 317 380 340 400 341 420 323 453 353 476 338 505 332 530 322 526 303 533 288 562 318 592 303 618 285 596 273 592 258 608 237 595 227 600 215 634 204 648 195 675 160 678 156 683 160 731"/>
    <path d="M711 305L717 317 732 325 762 324 746 339 768 353 765 368 785 377 798 378 796 400 805 415 824 411 848 437 850 455 862 466 865 452 912 452 905 461 902 478 915 505 902 515 900 550 890 577 930 612 927 645 905 654 885 657 876 675 861 686 860 710 868 731"/>
  </g>
  <use href="#yellow" class="case-hwy"/><use href="#yellow" class="road-yellow"/>
  <use href="#orange" class="case-hwy"/><use href="#orange" class="road-orange"/>
  <g class="ramp"><path d="M171 419L166 439H160V436M1131 409q6-2 11 3t2 5h-9q-7-3-4-8zM1212 498q4-6 10-4t4 7-8 4-6-7zM858 685L854 680 856 671 860 670M603 707l7-3"/></g>

  <!-- highway shields -->
  <g class="shields">
    <use href="#shield" x="202" y="456" width="18" height="22"/><text x="211" y="471">9</text>
    <use href="#shield" x="215" y="484" width="18" height="22"/><text x="224" y="499">9</text>
    <use href="#shield" x="364" y="488" width="18" height="22"/><text x="373" y="502">9</text>
    <use href="#shield" x="512" y="497" width="18" height="22"/><text x="521" y="512">9</text>
    <use href="#shield" x="573" y="505" width="18" height="22"/><text x="582" y="520">9</text>
    <use href="#shield" x="761" y="512" width="18" height="22"/><text x="770" y="527">9</text>
    <use href="#shield" x="1033" y="457" width="18" height="22"/><text x="1042" y="472">9</text>
    <use href="#shield" x="1196" y="490" width="18" height="22"/><text x="1205" y="505">9</text>
    <use href="#shield" x="1142" y="517" width="18" height="22"/><text x="1151" y="532">9</text>
    <use href="#shield" x="624" y="371" width="18" height="22"/><text x="633" y="386">44</text>
    <use href="#shield" x="1108" y="430" width="18" height="22"/><text x="1117" y="445">34</text>
    <use href="#shield" x="1177" y="645" width="18" height="22"/><text x="1186" y="660">34</text>
    <use href="#shield" x="1221" y="290" width="18" height="22"/>
    <use href="#shield-wide" x="825" y="354" width="26" height="22"/><text x="838" y="369">709B</text>
    <rect x="112" y="719" width="43" height="14" rx="3" fill="#fff"/><text x="137" y="729">DR136</text>
  </g>

  <!-- place names -->
  <g class="place">
    <text class="town" x="300" y="492">Bahadurgarh</text>
    <text class="village" x="270" y="587">Shidi Pur Lowa</text>
    <text class="town" x="122" y="703">i</text>
    <text class="muradnagar" x="1191" y="355">Muradnagar</text>
    <text class="city" x="1036" y="532">Ghaziabad</text>
    <text class="noida" x="948" y="704">Noida</text>
  </g>
  <g class="district">
    <text x="421" y="537">LOK NAYAK</text><text x="421" y="550">PURAM</text>
    <text x="376" y="633">NAJAFGARH</text><text x="525" y="675">PALAM</text>
    <text x="471" y="694">DWARKA</text><text x="607" y="667">DELHI</text><text x="607" y="680">CANTONMENT</text>
  </g>
  <g class="airport"><use href="#plane" x="957" y="461" width="13" height="13"/><use href="#plane" x="542" y="718" width="13" height="13"/>
    <text x="964" y="487">Hindan Air</text><text x="964" y="500">Force Station</text></g>

  <g class="hospital">
    <use href="#basket" x="811" y="417" width="20" height="20"/><text x="821" y="456">Sardar Vallabh Bhai</text><text x="821" y="475">Patel Hospital</text>
    <use href="#basket" x="876" y="501" width="20" height="20"/><text x="886" y="540">Guru Teg Bahadur</text><text x="886" y="559">Hospital</text>
    <use href="#basket" x="602" y="523" width="20" height="20"/><text x="612" y="561">All India Institute</text><text x="612" y="580">of Medical</text><text x="612" y="599">Sciences (AIIMS)</text>
    <use href="#basket" x="749" y="570" width="20" height="20"/><text x="759" y="608">G.B. Pant Hospital</text>
    <use href="#basket" x="710" y="704" width="20" height="20"/><text x="720" y="741">Safdarjung Hospital</text>
  </g>
  </svg>
  <div class="geocoder">
    <svg class="search-icon" viewBox="1 1 16 16" aria-hidden="true"><path fill="#757575" d="M7.400 2.500c-2.700 0-4.900 2.200-4.900 4.900s2.200 4.900 4.900 4.900c1 0 1.800-.2 2.500-.8l3.700 3.700c.2.200.4.300.8.300.7 0 1.100-.4 1.100-1.100 0-.3-.1-.5-.3-.8L11.400 10c.4-.8.8-1.600.8-2.500.1-2.800-2.100-5-4.800-5zm0 1.600c1.800 0 3.200 1.400 3.200 3.200s-1.400 3.200-3.200 3.200-3.300-1.300-3.300-3.100 1.400-3.300 3.300-3.300z"/></svg>
    <input type="text" placeholder="Search" aria-label="Search">
  </div>
  </section>
</main>
<div class="scrollbar" aria-hidden="true"><span class="thumb"></span></div>
</div>
</body>
</html>
```

FILE: styles.css
```css
* { box-sizing: border-box; }
body, h1, p { margin: 0; }
button { border: 0; padding: 0; background: none; color: inherit; font: inherit; }

.window {
  display: flex;
  flex-direction: column;
  height: 100vh;
  overflow: hidden;
  background: #fff;
  font-family: "Liberation Sans", Arial, sans-serif;
}

/* browser chrome */
.chrome { background: #3b3c47; color: #c5cad6; font: 13px "Noto Sans", sans-serif; }
.titlebar { display: flex; align-items: center; height: 24px; padding: 0 5px; background: #40424d; }
.title-side { display: flex; flex: 1; gap: 8px; }
.title-end { justify-content: flex-end; }
.window-title { padding-right: 22px; }
.dot { width: 13px; height: 13px; border-radius: 50%; }
.dot-blue { background: linear-gradient(90deg, #37c8dd, #5c8ce8); }
.dot-yellow { background: linear-gradient(90deg, #f8e71c, #fbab24); }
.dot-purple { background: linear-gradient(90deg, #d00ed0, #8400ff); }
.dot-red { background: linear-gradient(90deg, #ff3366, #ff5130); }

.tabbar { display: flex; height: 33px; background: #191c27; border-bottom: 1px solid #0e1018; }
.tab {
  display: flex;
  align-items: center;
  justify-content: space-between;
  width: 225px;
  height: 33px;
  padding: 0 9px 2px;
  border-top: 3px solid #cb0bd0;
  border-right: 1px solid #0e1018;
  background: #3b3c47;
}
.new-tab { width: 32px; display: grid; place-items: center; }

.icon { display: block; flex: none; width: 16px; height: 16px; fill: none; stroke: currentColor; stroke-width: 2; stroke-linejoin: round; }
.icon-btn { display: grid; place-items: center; }
.tab .icon { stroke-width: 1.5; }
.dim { color: #747580; }
.grey { color: #8f929d; }

.navbar { display: flex; align-items: center; height: 41px; border-bottom: 1px solid #4c4e5a; }
.nav-left { display: flex; align-items: center; gap: 16px; width: 234px; padding-left: 4px; }
.nav-left .back {
  display: grid;
  place-items: center;
  width: 32px;
  height: 32px;
  margin-right: -7px;
  border: 1px solid #2c2d36;
  border-radius: 50%;
  background: #6a6b75;
}
.urlbar {
  display: flex;
  align-items: center;
  flex: 1;
  height: 30px;
  padding: 0 6px;
  border: 1px solid #464954;
  border-radius: 4px;
  background: #161722;
}
.urlbar > .icon-btn { width: 28px; }
.url-sep { width: 1px; height: 22px; margin: 0 6px; background: #4c4e59; }
.url { flex: 1; padding: 0 0 2px 8px; color: #81848f; font-size: 14px; }
.url b { color: #dde0e8; font-weight: 400; }
.urlbar > .icon-btn:last-child { margin-right: -6px; }
.nav-right { display: flex; align-items: center; justify-content: flex-end; width: 273px; padding-right: 11px; gap: 16px; }
.nav-sep { width: 1px; height: 34px; margin: 0 -3px 0 -5px; background: #5b5d68; }

/* page */
.viewport { display: flex; flex: 1; min-height: 0; }
.page { display: flex; flex-direction: column; width: 100%; max-width: 1110px; margin: 0 auto; }
.jumbotron {
  padding: 11px 32px 61px;
  margin-bottom: 32px;
  background: #7db6b6;
  color: #212529;
  text-align: center;
}
.headline { display: flex; justify-content: center; gap: 24px; font-size: 56px; font-weight: 400; line-height: 67px; }
.map-mark { width: 63px; height: 56px; margin-top: 4px; fill: #212529; }
.lead { margin-top: 6px; font-size: 20px; line-height: 30px; }
.scrollbar {
  display: grid;
  grid-template-rows: 429fr 91fr 114fr;
  justify-content: center;
  width: 12px;
  border-left: 1px solid #c1bfba;
  background: #cdcdcd;
}
.thumb { grid-row: 2; width: 6px; border-radius: 3px; background: #7d8282; }

/* map */
.map { position: relative; flex: 1; min-height: 0; overflow: hidden; border-radius: 4px 4px 0 0; background: #efe9e1; }
.map-canvas { display: block; width: 100%; }
.geocoder {
  position: absolute;
  top: 10px;
  right: 10px;
  display: flex;
  align-items: center;
  gap: 6px;
  width: 240px;
  height: 36px;
  padding: 0 8px 1px;
  border-radius: 4px;
  background: #fff;
  box-shadow: 0 0 10px 2px rgba(0, 0, 0, .1);
}
.search-icon { flex: none; width: 19px; height: 19px; }
.geocoder input { width: 100%; border: 0; outline: 0; background: none; font: 15px "Liberation Sans", Arial, sans-serif; }
.geocoder input::placeholder { color: #a0a0a0; opacity: 1; }

.green { fill: #b7e59b; }
.park2 { fill: #cfe6b8; }
.sand { fill: #e3dcb2; }
.pink { fill: #e9d3da; }
.air { fill: #d5d7e0; }
.pt-case, .pt-road, .stream, .case-minor, .road-minor, .case-art, .road-art, .case-hwy, .road-yellow, .road-orange, .border, .ramp { fill: none; stroke-linejoin: round; }
.pt-case { stroke: #dcdce9; stroke-width: 3; }
.pt-road { stroke: #fff; stroke-width: 2; }
.stream { stroke: #a9d5e8; stroke-width: 3; }
.w-big, .w-mid, .w-mid2, .w-dash { fill: none; stroke: #75cff0; stroke-linejoin: round; }
.w-big { stroke-width: 17; }
.w-mid { stroke-width: 6; }
.w-mid2 { stroke-width: 9; }
.w-dash { stroke-width: 7; stroke-dasharray: 22 7; }
.case-minor { stroke: #d8d9e8; stroke-width: 9; }
.road-minor { stroke: #fff; stroke-width: 5; }
.case-art { stroke: #d6d7e8; stroke-width: 12; }
.road-art { stroke: #fff; stroke-width: 8; }
.case-hwy { stroke: #fff; stroke-width: 12; }
.road-yellow { stroke: #f2d05b; stroke-width: 7; }
.road-orange { stroke: #ffa25e; stroke-width: 8; }
.border { stroke: #9a9bad; stroke-width: 1; stroke-dasharray: 6 1; }
.ramp { stroke: #ffa877; stroke-width: 1; }

.map-canvas text { text-anchor: middle; paint-order: stroke; stroke-linejoin: round; }
.shields { fill: #ffe666; stroke: #29291f; stroke-width: 1; }
.map-canvas .shields text { fill: #25251d; stroke: none; font: 700 9px "Open Sans", sans-serif; }
.place { fill: #333; stroke: #efe9e1; stroke-width: 2; font-family: Roboto, sans-serif; }
.town { font-size: 15px; }
.village { font-size: 11px; }
.muradnagar { font-size: 14px; }
.city { font-size: 18px; font-weight: 500; fill: #111; }
.noida { font-size: 16px; font-weight: 500; fill: #111; }
.district { fill: #7179a3; stroke: #efe9e1; stroke-width: 2; font: 11px Roboto, sans-serif; letter-spacing: 1px; }
.airport { fill: #4a5bb8; stroke: #e8e6e8; stroke-width: 2; font: 500 11px Roboto, sans-serif; }
.airport use { stroke: none; }
.hospital { fill: #111; font: 600 15px "Open Sans", sans-serif; }
.hospital text { stroke: #f5f2ed; stroke-width: 1; }
```
